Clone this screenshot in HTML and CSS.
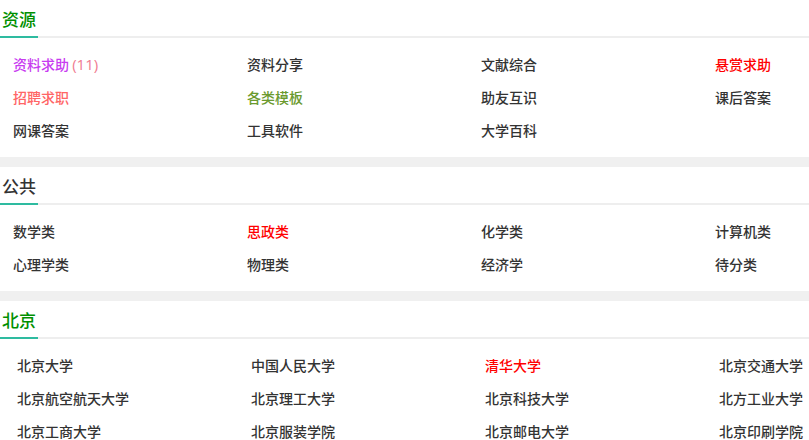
FILE: index.html
```html
<!DOCTYPE html>
<html lang="zh-CN">
<head>
    <meta charset="UTF-8">
    <meta name="viewport" content="width=device-width, initial-scale=1.0">
    <title>分类</title>
    <link rel="stylesheet" href="styles.css">
</head>
<body>
    <div class="section">
        <div class="section-head"><span class="title green">资源</span></div>
        <div class="items">
            <a class="item purple">资料求助 <span class="count">(11)</span></a>
            <a class="item">资料分享</a>
            <a class="item">文献综合</a>
            <a class="item red">悬赏求助</a>
            <a class="item salmon">招聘求职</a>
            <a class="item olive">各类模板</a>
            <a class="item">助友互识</a>
            <a class="item">课后答案</a>
            <a class="item">网课答案</a>
            <a class="item">工具软件</a>
            <a class="item">大学百科</a>
        </div>
    </div>
    <div class="section">
        <div class="section-head"><span class="title">公共</span></div>
        <div class="items">
            <a class="item">数学类</a>
            <a class="item red">思政类</a>
            <a class="item">化学类</a>
            <a class="item">计算机类</a>
            <a class="item">心理学类</a>
            <a class="item">物理类</a>
            <a class="item">经济学</a>
            <a class="item">待分类</a>
        </div>
    </div>
    <div class="section">
        <div class="section-head"><span class="title green">北京</span></div>
        <div class="items wide">
            <a class="item">北京大学</a>
            <a class="item">中国人民大学</a>
            <a class="item red">清华大学</a>
            <a class="item">北京交通大学</a>
            <a class="item">北京航空航天大学</a>
            <a class="item">北京理工大学</a>
            <a class="item">北京科技大学</a>
            <a class="item">北方工业大学</a>
            <a class="item">北京工商大学</a>
            <a class="item">北京服装学院</a>
            <a class="item">北京邮电大学</a>
            <a class="item">北京印刷学院</a>
        </div>
    </div>
</body>
</html>
```

FILE: styles.css
```css
body {
    margin: 0;
    background: #f0f0f0;
    font-family: "Noto Sans CJK SC", "Liberation Sans", sans-serif;
    color: #333;
    overflow: hidden;
}
.section {
    background: #fff;
    margin-bottom: 10px;
}
.section-head {
    height: 36px;
    border-bottom: 2px solid #eee;
}
.title {
    display: inline-block;
    box-sizing: border-box;
    width: 38px;
    height: 38px;
    padding: 5px 0 0 2px;
    font-size: 17px;
    line-height: 28px;
    font-weight: 500;
    color: #333;
    border-bottom: 2px solid #2ebba0;
}
.title.green { color: #009000; }
.items {
    display: grid;
    grid-template-columns: repeat(4, 234px);
    padding: 10px 0 10px 13px;
}
.items.wide {
    padding-left: 17px;
}
.item {
    font-size: 14px;
    line-height: 33px;
    font-weight: 500;
    white-space: nowrap;
    color: #333;
    cursor: pointer;
}
.item:hover { text-decoration: underline; }
.count {
    font-family: "Open Sans", "Liberation Sans", sans-serif;
    font-size: 15px;
    font-weight: normal;
    color: #f07a90;
}
.purple { color: #c83cf0; }
.red { color: #f00; }
.salmon { color: #ff6666; }
.olive { color: #6b9a2e; }
```
